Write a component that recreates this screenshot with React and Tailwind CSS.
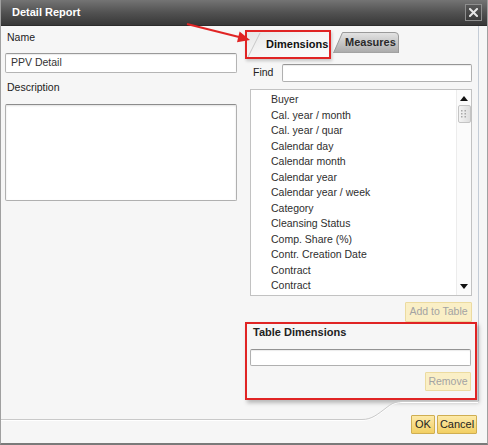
export default function App() {
  const items = [
    "Buyer",
    "Cal. year / month",
    "Cal. year / quar",
    "Calendar day",
    "Calendar month",
    "Calendar year",
    "Calendar year / week",
    "Category",
    "Cleansing Status",
    "Comp. Share (%)",
    "Contr. Creation Date",
    "Contract",
    "Contract",
  ];
  return (
    <div className="relative w-[488px] h-[445px] flex flex-col bg-[#f6f6f6] border-x border-x-[#a0a0a0] border-b-2 border-b-[#7a7a7a] text-[10.5px] text-[#222] overflow-hidden font-['Liberation_Sans',Arial,sans-serif]">
      {/* Title bar */}
      <div className="h-[26px] shrink-0 flex items-center pl-[11px] pr-[5px] bg-linear-to-b from-[#747474] via-[#525252] to-[#383838] text-white font-bold text-[11px] border-b border-b-[#2c2c2c]">
        <span>Detail Report</span>
        <div className="ml-auto w-[17px] h-[17px] border border-[#8e8e8e] bg-linear-to-b from-[#585858] to-[#3a3a3a] flex items-center justify-center">
          <svg width="9" height="9" viewBox="0 0 9 9">
            <path d="M1 1 L8 8 M8 1 L1 8" stroke="#e6e6e6" strokeWidth="2" strokeLinecap="square" />
          </svg>
        </div>
      </div>

      {/* Main row */}
      <div className="flex h-[375px] shrink-0">
        {/* Left column */}
        <div className="ml-[4px] w-[232px] pt-[5px] flex flex-col">
          <div className="h-[13px] leading-[13px] ml-[2px]">Name</div>
          <div className="mt-[9px] h-[20px] bg-white border border-[#b4b4b4] border-t-[#9a9a9a] rounded-[2px] shadow-[inset_0_1px_1px_rgba(0,0,0,0.08)] flex items-center pl-[5px] text-[#333]">
            PPV Detail
          </div>
          <div className="mt-[8px] h-[13px] leading-[13px] ml-[2px]">Description</div>
          <div className="mt-[10px] h-[97px] bg-white border border-[#b0b0b0] border-t-[#8c8c8c] rounded-[2px] shadow-[inset_0_1px_2px_rgba(0,0,0,0.12)]"></div>
        </div>

        {/* Right column */}
        <div className="ml-[8px] w-[234px] border-r border-r-[#c4ccd6] flex flex-col pt-[4px]">
          {/* Tabs */}
          <div className="flex h-[29px] items-start">
            <div className="relative w-[86px] h-[29px] border-2 border-[#e02424] bg-linear-to-br from-[#e6e6e6] via-[#f6f6f6] to-[#fbfbfb] flex items-center pl-[19px] font-bold text-[11px] text-[#111] shadow-[1px_2px_3px_rgba(0,0,0,0.2)]">
              <svg className="absolute left-0 top-0" width="16" height="25" viewBox="0 0 16 25">
                <path d="M1 25 L13 1" stroke="#c8c8c8" strokeWidth="1" />
              </svg>
              <span className="relative">Dimensions</span>
            </div>
            <div className="relative ml-[2px] mt-[2px] w-[66px] h-[21px] flex items-center pl-[12px] font-bold text-[11px] text-[#2a2a2a]">
              <svg className="absolute left-0 top-0" width="66" height="21" viewBox="0 0 66 21">
                <defs>
                  <linearGradient id="mtab" x1="0" y1="0" x2="0" y2="1">
                    <stop offset="0" stopColor="#e4e4e4" />
                    <stop offset="1" stopColor="#a9a9a9" />
                  </linearGradient>
                </defs>
                <path d="M0.5 21 L9.5 0.5 H62 Q65.5 0.5 65.5 4 V21 Z" fill="url(#mtab)" stroke="#9a9a9a" strokeWidth="1" />
              </svg>
              <span className="relative">Measures</span>
            </div>
          </div>

          {/* Find row */}
          <div className="mt-[5px] h-[18px] flex items-center pl-[8px] pr-[6px]">
            <span>Find</span>
            <div className="ml-auto w-[190px] h-[18px] bg-white border border-[#b0b0b0] border-t-[#959595] rounded-[2px] shadow-[inset_0_1px_1px_rgba(0,0,0,0.08)]"></div>
          </div>

          {/* List */}
          <div className="mt-[7px] ml-[5px] w-[222px] h-[207px] bg-white border border-[#c2c2c2] flex">
            <div className="flex-1 pl-[20px] pt-[2px] leading-[15.5px] text-[#2e2e2e]">
              {items.map((t, i) => (
                <div key={i} className="whitespace-nowrap">{t}</div>
              ))}
            </div>
            <div className="w-[15px] border-l border-l-[#ececec] bg-[#fbfbfb] flex flex-col items-center">
              <div className="h-[14px] flex items-center justify-center pt-[2px]">
                <svg width="8" height="5" viewBox="0 0 8 5"><path d="M0 5 L4 0 L8 5 Z" fill="#111" /></svg>
              </div>
              <div className="mt-[1px] w-[13px] h-[18px] border border-[#c4c4c4] rounded-[2px] bg-linear-to-r from-[#f4f4f4] to-[#dedede] flex items-center justify-center">
                <svg width="6" height="8" viewBox="0 0 6 8">
                  <g fill="#a8a8a8">
                    <rect x="0" y="0" width="1.5" height="1.5" /><rect x="3.5" y="0" width="1.5" height="1.5" />
                    <rect x="0" y="3" width="1.5" height="1.5" /><rect x="3.5" y="3" width="1.5" height="1.5" />
                    <rect x="0" y="6" width="1.5" height="1.5" /><rect x="3.5" y="6" width="1.5" height="1.5" />
                  </g>
                </svg>
              </div>
              <div className="flex-1"></div>
              <div className="h-[14px] flex items-center justify-center pb-[3px]">
                <svg width="8" height="5" viewBox="0 0 8 5"><path d="M0 0 L8 0 L4 5 Z" fill="#111" /></svg>
              </div>
            </div>
          </div>

          {/* Add to Table */}
          <div className="mt-[6px] self-end mr-[6px] w-[67px] h-[20px] bg-[#faefc6] border border-[#ecdba0] rounded-[1px] flex items-center justify-center text-[#a3a3a3]">
            Add to Table
          </div>

          {/* Table Dimensions */}
          <div className="w-[232px] h-[78px] border-2 border-[#e02424] flex flex-col shadow-[2px_3px_4px_rgba(0,0,0,0.25)]">
            <div className="mt-[2px] ml-[6px] h-[13px] leading-[13px] font-bold text-[11px] text-[#222]">Table Dimensions</div>
            <div className="mt-[10px] ml-[3px] mr-[4px] h-[17px] bg-white border border-[#b0b0b0] border-t-[#939393] rounded-[2px] shadow-[inset_0_1px_1px_rgba(0,0,0,0.08)]"></div>
            <div className="mt-[6px] self-end mr-[4px] w-[46px] h-[19px] bg-[#faefc6] border border-[#ecdba0] rounded-[1px] flex items-center justify-center text-[#a3a3a3]">
              Remove
            </div>
          </div>
        </div>
      </div>

      {/* Footer buttons */}
      <div className="mt-[14px] flex justify-end pr-[10px] gap-[2px]">
        <div className="w-[24px] h-[19px] bg-linear-to-b from-[#fdeaa8] to-[#f2cf62] border border-[#cfae52] rounded-[1px] flex items-center justify-center text-[#1e1e1e] text-[11px]">
          OK
        </div>
        <div className="w-[40px] h-[19px] bg-linear-to-b from-[#fdeaa8] to-[#f2cf62] border border-[#cfae52] rounded-[1px] flex items-center justify-center text-[#1e1e1e] text-[11px]">
          Cancel
        </div>
      </div>

      {/* Decorative separator line */}
      <svg className="absolute left-[-1px] top-0 pointer-events-none" width="488" height="445" viewBox="0 0 488 445">
        <path d="M0 420.5 H362 C372 420.5 378 415 386 409 C391 405 395 402.5 402 402.5 H478" fill="none" stroke="#ffffff" strokeWidth="1" />
        <path d="M0 419.5 H362 C372 419.5 378 414 386 408 C391 404 395 401.5 402 401.5 H478.5" fill="none" stroke="#c9c9c9" strokeWidth="1" />
      </svg>

      {/* Red arrow annotation */}
      <svg className="absolute left-[-1px] top-0 pointer-events-none" width="488" height="445" viewBox="0 0 488 445">
        <path d="M187 24 L239 37" stroke="#e02424" strokeWidth="2" />
        <path d="M250 40 L239.6 31.6 L237 42.2 Z" fill="#e02424" />
      </svg>
    </div>
  );
}
